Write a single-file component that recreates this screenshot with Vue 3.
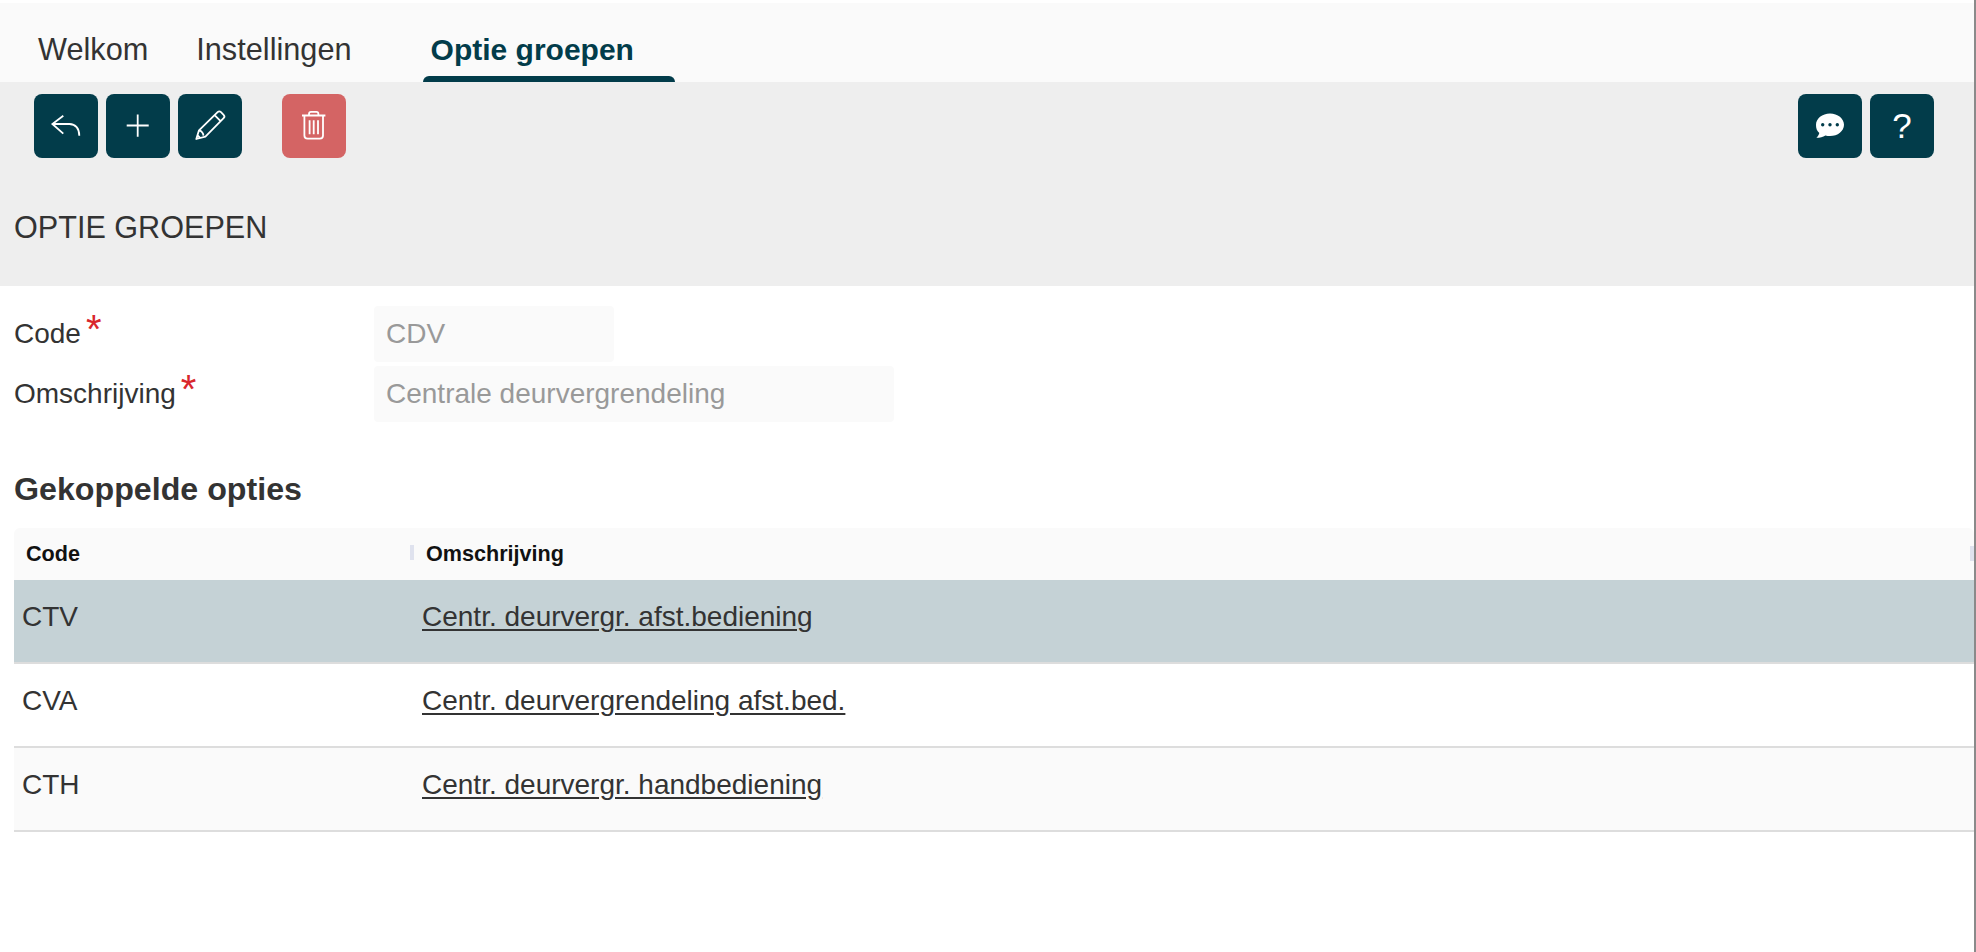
<template>
  <div class="page">
    <nav class="tabs">
      <a class="tab">Welkom</a>
      <a class="tab">Instellingen</a>
      <a class="tab active">Optie groepen</a>
    </nav>

    <section class="header">
      <div class="toolbar">
        <div class="btn-group">
          <button class="btn" title="Terug">
            <svg viewBox="0 0 64 64" width="64" height="64" fill="none" stroke="currentColor" stroke-width="1.8"><path d="M29.3 21.7 18.4 30l10.9 9.7M18.4 30H35.5c6 0 9.8 4.6 9.8 11.7" /></svg>
          </button>
          <button class="btn" title="Toevoegen">
            <svg viewBox="0 0 64 64" width="64" height="64" fill="none" stroke="currentColor" stroke-width="1.8"><path d="M20.7 31.5h22M31.7 20.4v22.3" /></svg>
          </button>
          <button class="btn" title="Bewerken">
            <svg viewBox="0 0 64 64" width="64" height="64" fill="none" stroke="currentColor" stroke-width="1.8" stroke-linejoin="round"><path d="M18.3 45 21 36.3 39.6 18.2c1-1 2.4-1 3.4 0l2.6 2.6c1 1 1 2.4 0 3.4L27.400 42.600ZM36.600 21.200l6 6M21 36.300c1.200.2 2 .6 2.800 1.500.9.9 1.600 2.600 1.700 3.800M19.400 41.200l2.800 2.800" /></svg>
          </button>
          <button class="btn danger" title="Verwijderen">
            <svg viewBox="0 0 64 64" width="64" height="64" fill="none" stroke="currentColor" stroke-width="1.8" stroke-linejoin="round"><path d="M20 21.500h23.400M27 21.300v-1.400c0-1.200.9-2 2-2h5.400c1.100 0 2 .8 2 2v1.400M22.400 21.500v20c0 2 1.200 3.200 3.200 3.200h12.200c2 0 3.200-1.200 3.200-3.200v-20M27.600 26.200v14M31.700 26.200v14M36 26.200v14" /></svg>
          </button>
        </div>
        <div class="btn-group">
          <button class="btn" title="Opmerkingen">
            <svg viewBox="0 0 64 64" width="64" height="64"><path fill="currentColor" d="M32 19.400c7.800 0 14 5 14 11.300S39.800 42 32 42c-1.600 0-3.200-.2-4.600-.6-2.400 1.500-5.400 2.300-9 2.400 1.500-1.400 2.500-3 2.900-4.800C18.800 37 18 34 18 30.700c0-6.300 6.200-11.300 14-11.300Z" /><circle cx="24.700" cy="30.700" r="1.700" fill="#023c4a" /><circle cx="32" cy="30.700" r="1.700" fill="#023c4a" /><circle cx="39.300" cy="30.700" r="1.700" fill="#023c4a" /></svg>
          </button>
          <button class="btn help" title="Help">?</button>
        </div>
      </div>
      <h1 class="title">OPTIE GROEPEN</h1>
    </section>

    <form class="form">
      <div class="form-row" v-for="field in fields" :key="field.label">
        <label class="form-label">{{ field.label }}<sup class="required">*</sup></label>
        <input class="form-input" :class="field.size" :placeholder="field.value" disabled />
      </div>
    </form>

    <h2 class="subtitle">Gekoppelde opties</h2>

    <div class="table">
      <div class="table-head">
        <div class="col-code">Code</div>
        <div class="col-desc">Omschrijving</div>
      </div>
      <div
        v-for="(row, i) in rows"
        :key="row.code"
        class="table-row"
        :class="{ selected: i === 0, striped: i === 2 }"
      >
        <div class="cell-code">{{ row.code }}</div>
        <a class="cell-link">{{ row.desc }}</a>
      </div>
    </div>
  </div>
</template>

<script setup>
const fields = [
  { label: 'Code', value: 'CDV', size: 'small' },
  { label: 'Omschrijving', value: 'Centrale deurvergrendeling', size: 'large' },
];

const rows = [
  { code: 'CTV', desc: 'Centr. deurvergr. afst.bediening' },
  { code: 'CVA', desc: 'Centr. deurvergrendeling afst.bed.' },
  { code: 'CTH', desc: 'Centr. deurvergr. handbediening' },
];
</script>

<style>
html,
body {
  margin: 0;
  background: #fff;
}
</style>

<style scoped>
.page {
  min-height: 952px;
  box-sizing: border-box;
  border-right: 2px solid #8a8a8a;
  font-family: "Liberation Sans", Arial, sans-serif;
  font-size: 28px;
  color: #333;
}

.tabs {
  display: flex;
  align-items: center;
  height: 79px;
  border-top: 3px solid #fff;
  padding-left: 13px;
  background: #fafafa;
}

.tab {
  position: relative;
  display: flex;
  align-items: center;
  height: 79px;
  box-sizing: border-box;
  padding: 15px 23px 0 25px;
  font-size: 30.7px;
}

.tab.active {
  margin-left: 48px;
  padding: 15px 41px 0 8px;
  font-size: 30px;
  font-weight: 700;
  color: #023c4a;
}

.tab.active::after {
  content: "";
  position: absolute;
  left: 0;
  right: 0;
  bottom: 0;
  height: 6px;
  border-radius: 6px 6px 0 0;
  background: #023c4a;
}

.header {
  height: 204px;
  box-sizing: border-box;
  padding-top: 12px;
  background: #eee;
}

.toolbar {
  display: flex;
  justify-content: space-between;
  padding: 0 40px 0 34px;
}

.btn-group {
  display: flex;
  gap: 8px;
}

.btn {
  width: 64px;
  height: 64px;
  padding: 0;
  border: 0;
  border-radius: 8px;
  background: #023c4a;
  color: #fff;
  font-family: inherit;
}

.btn svg {
  display: block;
}

.btn.danger {
  margin-left: 32px;
  background: #d46464;
}

.btn.help {
  font-size: 35px;
  line-height: 64px;
  padding-bottom: 2px;
}

.title {
  margin: 49px 0 0 14px;
  font-size: 30.6px;
  line-height: 40px;
  font-weight: 400;
}

.form {
  display: flex;
  flex-direction: column;
  gap: 4px;
  padding: 20px 0 0 14px;
}

.form-row {
  display: flex;
  align-items: center;
}

.form-label {
  width: 360px;
  line-height: 40px;
}

.required {
  color: #d9262c;
  font-size: 40px;
  line-height: 0;
  margin-left: 5px;
  vertical-align: 0;
}

.form-input {
  box-sizing: border-box;
  height: 56px;
  padding: 0 12px;
  border: 0;
  border-radius: 4px;
  background: #fafafa;
  font: inherit;
}

.form-input::placeholder {
  color: #999;
  opacity: 1;
}

.form-input.small {
  width: 240px;
}

.form-input.large {
  width: 520px;
}

.subtitle {
  margin: 47px 0 0 14px;
  font-size: 32.2px;
  line-height: 40px;
  font-weight: 700;
}

.table {
  margin: 19px 0 0 14px;
}

.table-head {
  display: flex;
  height: 52px;
  align-items: center;
  position: relative;
  border-radius: 6px 6px 0 0;
  background: #fafafa;
  color: #111;
  font-size: 21.6px;
  font-weight: 700;
}

.table-head::after {
  content: "";
  position: absolute;
  right: 0;
  top: 18px;
  width: 4px;
  height: 15px;
  background: #dfe2ee;
}

.col-code {
  position: relative;
  width: 400px;
  box-sizing: border-box;
  padding-left: 12px;
}

.col-code::after {
  content: "";
  position: absolute;
  left: 396px;
  top: 4px;
  width: 4px;
  height: 15px;
  background: #dfe2ee;
}

.col-desc {
  padding-left: 12px;
}

.table-row {
  display: flex;
  height: 84px;
  box-sizing: border-box;
  padding-top: 17px;
  line-height: 40px;
  border-bottom: 2px solid #ddd;
}

.table-row.selected {
  background: #c5d2d6;
}

.table-row.striped {
  background: #fafafa;
}

.cell-code {
  width: 400px;
  box-sizing: border-box;
  padding-left: 8px;
}

.cell-link {
  padding-left: 8px;
  text-decoration: underline;
  text-underline-offset: 3px;
}
</style>
